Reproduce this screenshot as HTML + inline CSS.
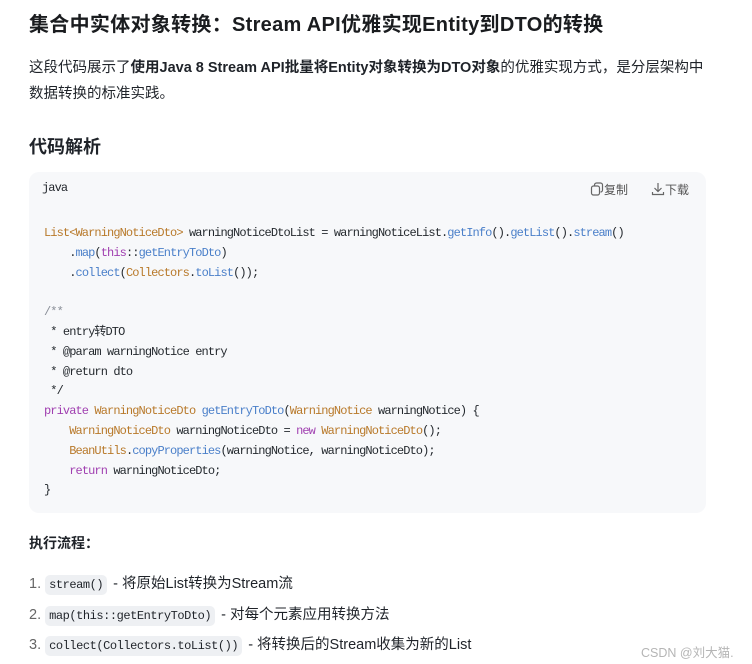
<!DOCTYPE html>
<html><head><meta charset="utf-8"><style>
body{margin:0;background:#fff;width:752px;height:664px;overflow:hidden;font-family:"Liberation Sans","Noto Sans CJK SC",sans-serif;color:#1f2329;position:relative}
.a{position:absolute;white-space:nowrap}
h1{position:absolute;left:29px;top:8px;margin:0;font-size:20px;font-weight:bold;color:#1a1c1f;letter-spacing:0.3px}
.p{font-size:14.5px;left:29px}
.card{position:absolute;left:29px;top:172px;width:677px;height:341px;background:#f7f8fa;border-radius:10px}
.code{position:absolute;left:44px;top:224px;font-family:"Liberation Mono","Noto Sans CJK SC",monospace;font-size:12px;letter-spacing:-0.9px;line-height:19.8px;white-space:pre;color:#24292e}
.o{color:#b8792a}.b{color:#4a7fc9}.k{color:#a03fb0}.c{color:#8a8f98}
.li{font-size:14.5px;left:29px}
.n{color:#666}
.chip{font-family:"Liberation Mono",monospace;font-size:12px;letter-spacing:-0.45px;background:#eef0f3;border-radius:5px;padding:3px 4px;color:#1f2329;margin-right:2px}
</style></head><body>
<h1>集合中实体对象转换：Stream API优雅实现Entity到DTO的转换</h1>
<div class="a p" style="top:56px">这段代码展示了<b>使用Java 8 Stream API批量将Entity对象转换为DTO对象</b>的优雅实现方式，是分层架构中</div>
<div class="a p" style="top:82px">数据转换的标准实践。</div>
<div class="a" style="left:29px;top:133px;font-size:18px;font-weight:bold">代码解析</div>
<div class="card"></div>
<div class="a" style="left:42px;top:181px;font-family:'Liberation Mono',monospace;font-size:12px;letter-spacing:-0.9px">java</div>
<div class="a" style="left:590px;top:181px;font-size:12px;color:#555"><svg width="14" height="14" viewBox="0 0 14 14" style="vertical-align:-2px"><rect x="1.5" y="4" width="8" height="9" rx="2" fill="none" stroke="#666" stroke-width="1.2"/><path d="M4.5 3.5V3a2 2 0 0 1 2-2h4a2 2 0 0 1 2 2v5a2 2 0 0 1-2 2" fill="none" stroke="#666" stroke-width="1.2"/></svg>复制</div>
<div class="a" style="left:651px;top:181px;font-size:12px;color:#555"><svg width="14" height="14" viewBox="0 0 14 14" style="vertical-align:-2px"><path d="M7 1v8M3.5 6L7 9.5 10.5 6M1.5 10v2.5h11V10" fill="none" stroke="#666" stroke-width="1.2"/></svg>下载</div>
<div class="code"><span class="o">List&lt;WarningNoticeDto&gt;</span> warningNoticeDtoList = warningNoticeList.<span class="b">getInfo</span>().<span class="b">getList</span>().<span class="b">stream</span>()
    .<span class="b">map</span>(<span class="k">this</span>::<span class="b">getEntryToDto</span>)
    .<span class="b">collect</span>(<span class="o">Collectors</span>.<span class="b">toList</span>());

<span class="c">/**</span>
 * entry转DTO
 * @param warningNotice entry
 * @return dto
 */
<span class="k">private</span> <span class="o">WarningNoticeDto</span> <span class="b">getEntryToDto</span>(<span class="o">WarningNotice</span> warningNotice) {
    <span class="o">WarningNoticeDto</span> warningNoticeDto = <span class="k">new</span> <span class="o">WarningNoticeDto</span>();
    <span class="o">BeanUtils</span>.<span class="b">copyProperties</span>(warningNotice, warningNoticeDto);
    <span class="k">return</span> warningNoticeDto;
}</div>
<div class="a" style="left:29px;top:533px;font-size:14px;font-weight:bold">执行流程：</div>
<div class="a li" style="top:572px"><span class="n">1.</span> <span class="chip">stream()</span> - 将原始List转换为Stream流</div>
<div class="a li" style="top:603px"><span class="n">2.</span> <span class="chip">map(this::getEntryToDto)</span> - 对每个元素应用转换方法</div>
<div class="a li" style="top:633px"><span class="n">3.</span> <span class="chip">collect(Collectors.toList())</span> - 将转换后的Stream收集为新的List</div>
<div class="a" style="left:641px;top:642px;font-size:12.5px;color:#b5b5b5">CSDN @刘大猫.</div>
</body></html>
